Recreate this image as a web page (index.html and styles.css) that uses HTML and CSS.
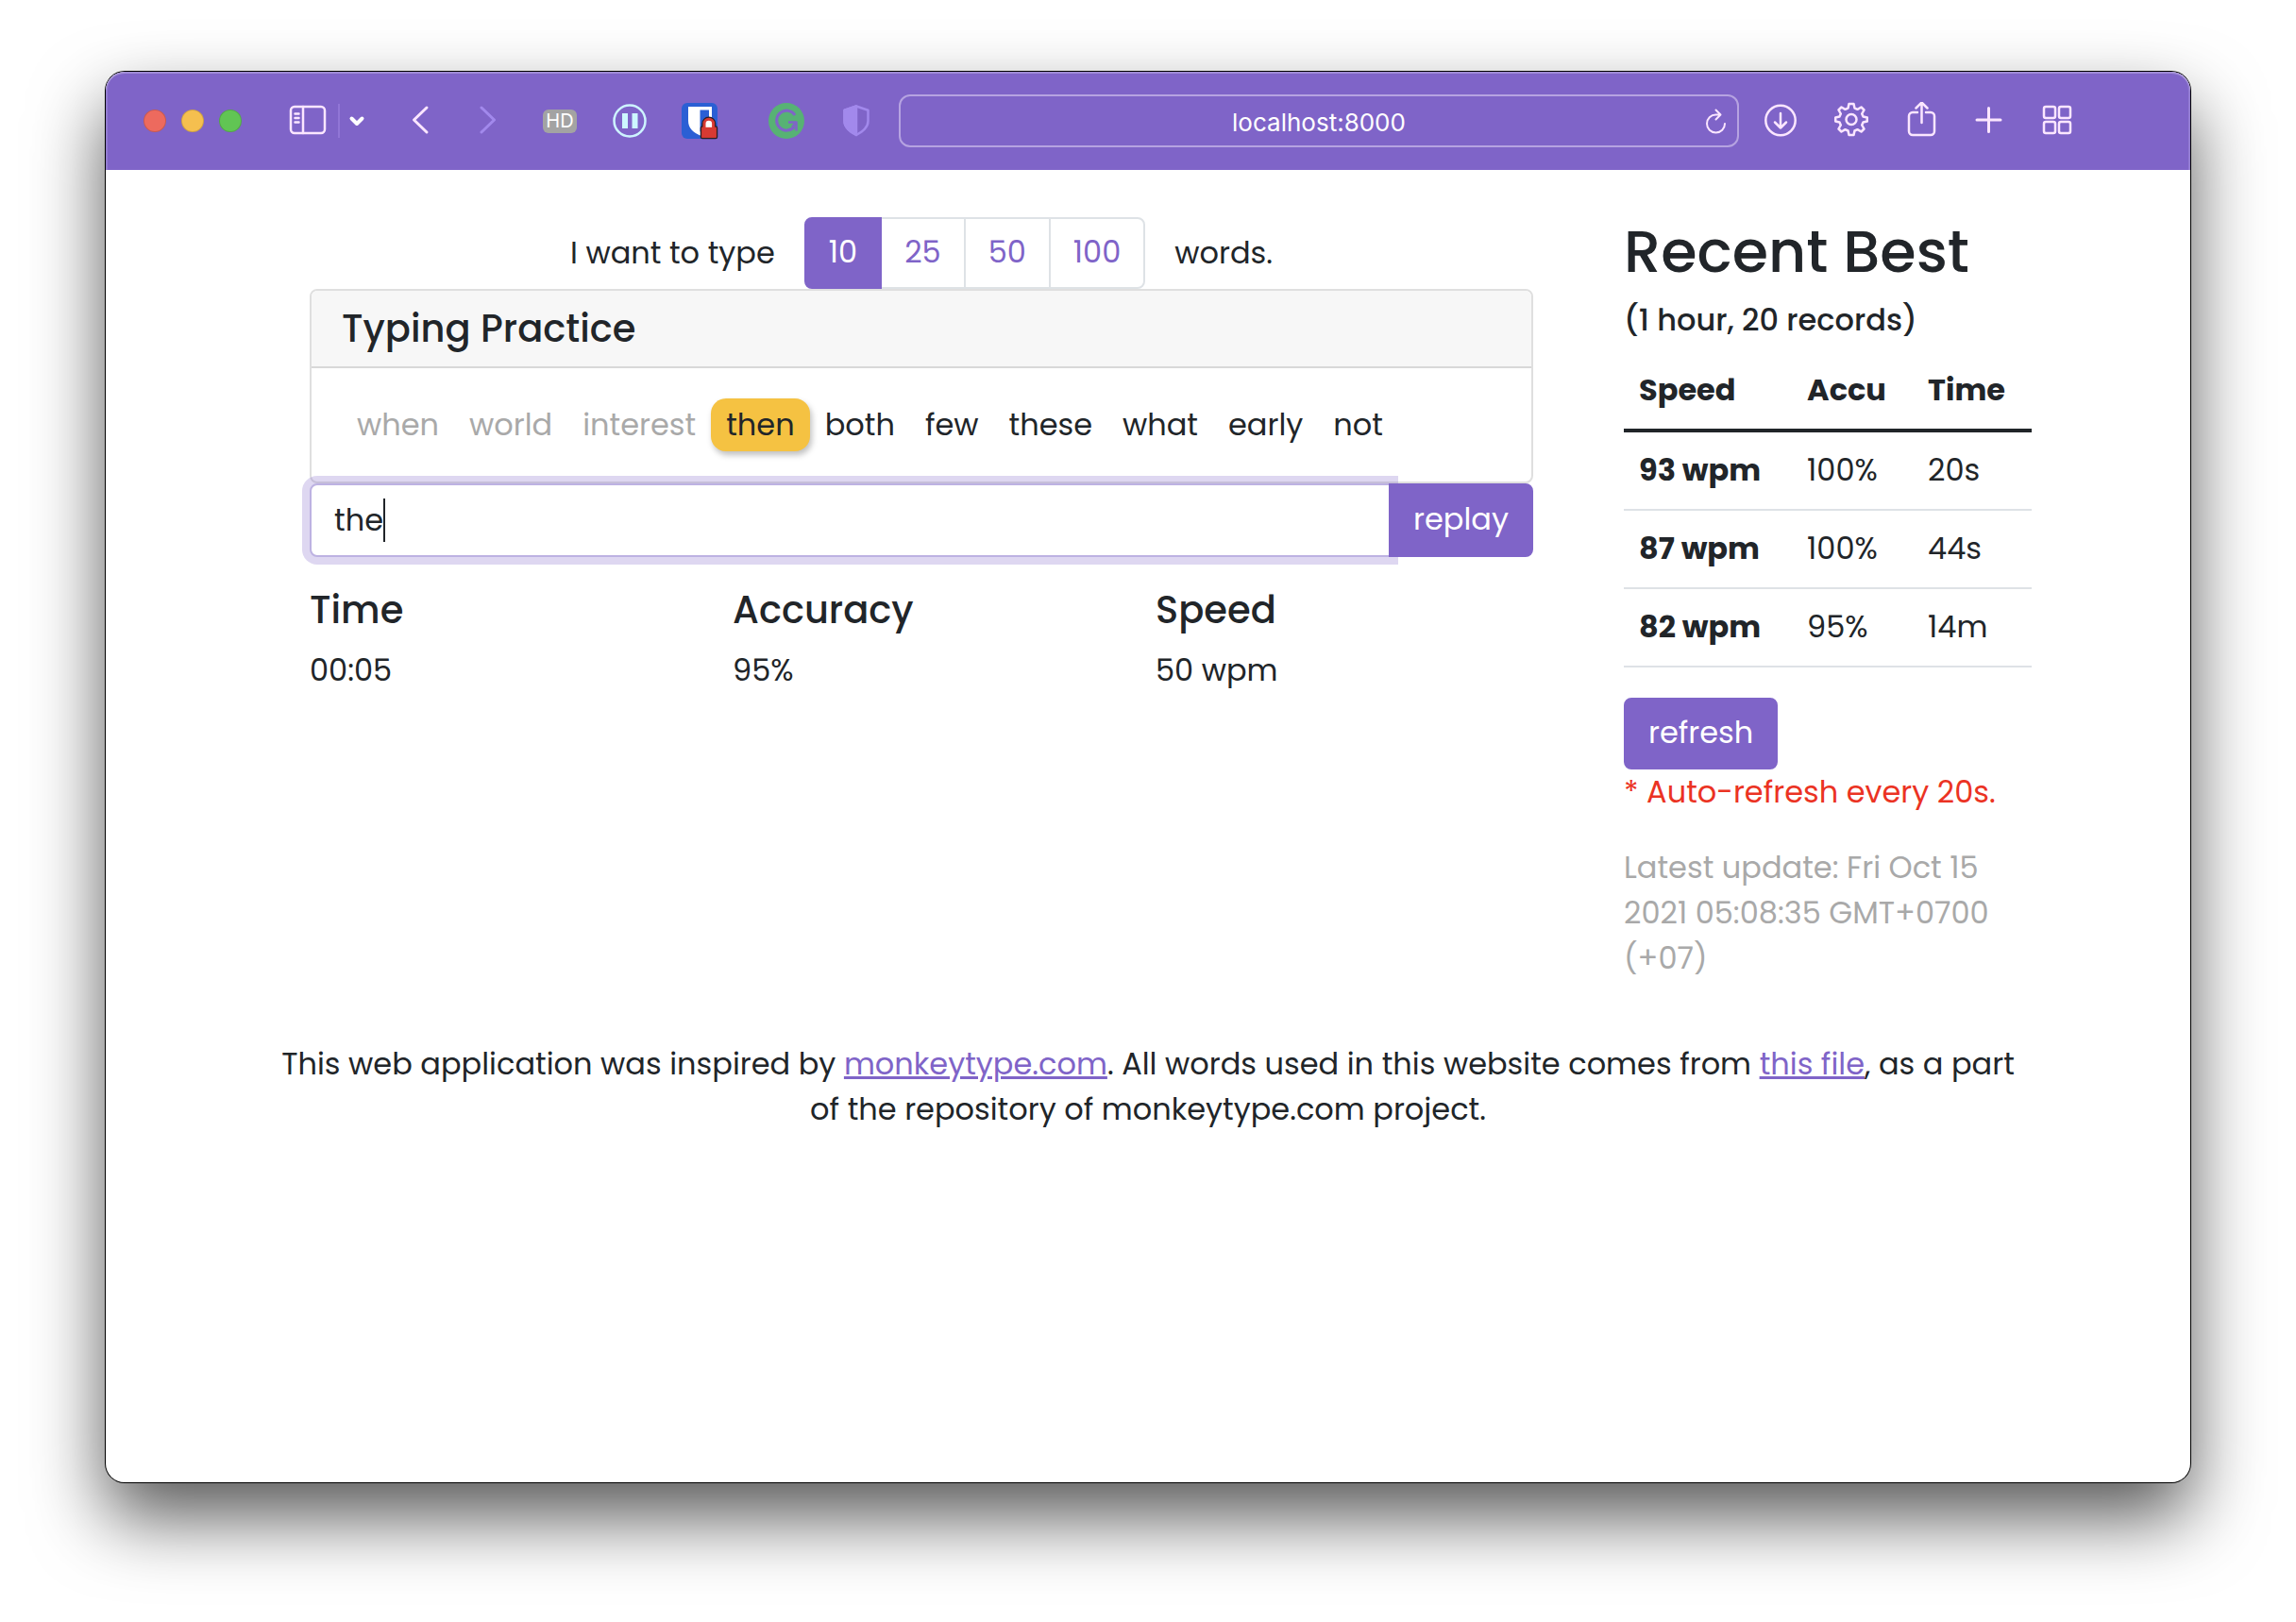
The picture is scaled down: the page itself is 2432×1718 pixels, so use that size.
FILE: index.html
```
<!DOCTYPE html>
<html lang="en">
<head>
<meta charset="utf-8">
<meta name="viewport" content="width=device-width, initial-scale=1">
<title>Typing Practice</title>
<link rel="stylesheet" href="styles.css">
</head>
<body>
<div class="window">
  <header class="toolbar">
    <div class="lights">
      <button class="light light-close" aria-label="Close"></button>
      <button class="light light-min" aria-label="Minimise"></button>
      <button class="light light-max" aria-label="Zoom"></button>
    </div>
    <div class="sidebar-tools">
      <button class="tool" aria-label="Sidebar"><svg width="40" height="40" viewBox="0 0 40 40"><rect x="2" y="5" width="36" height="28" rx="4"/><path d="M15 5v28M6.500 12.500h4M6.500 17h4M6.500 21.500h4" /></svg></button>
      <span class="divider"></span>
      <button class="tool tool-small" aria-label="Tab groups"><svg class="bold" width="20" height="40" viewBox="0 0 20 40"><path d="M4.500 17.500l5.500 5.500 5.500-5.500"/></svg></button>
    </div>
    <div class="nav-tools">
      <button class="tool" aria-label="Back"><svg class="medium" width="32" height="40" viewBox="0 0 32 40"><path d="M23 6L9.500 19 23 32"/></svg></button>
      <button class="tool tool-off" aria-label="Forward"><svg class="medium" width="32" height="40" viewBox="0 0 32 40"><path d="M9 6l13.500 13L9 32"/></svg></button>
    </div>
    <div class="extensions">
      <button class="tool hd" aria-label="HD video"><span class="hd-badge">HD</span></button>
      <button class="tool" aria-label="Pause"><svg width="40" height="40" viewBox="0 0 40 40"><circle cx="20" cy="20" r="16.500" fill="none" stroke="#cdf3ff" stroke-width="2.500"/><path d="M12 12h6v16h-6zM22.500 12h6v16h-6z" fill="#cdf6ff" stroke="none"/></svg></button>
      <button class="tool" aria-label="Password manager"><svg width="40" height="40" viewBox="0 0 40 40"><g stroke="none"><rect x="1" y="1" width="38" height="38" rx="6" fill="#2b5fd4"/><path d="M8 5h25v15c0 8-6 12.500-12.500 15.500C14 32.500 8 28 8 20z" fill="#fff"/><path d="M20.500 8.500H30V20c0 5-4 8.500-9.500 11.500z" fill="#2b5fd4"/></g><path d="M25 27v-4a4.800 4.800 0 0 1 9.600 0v4" stroke="#2a2027" stroke-width="5.500"/><rect x="21.500" y="26" width="17" height="12.500" rx="1.500" fill="#d83a33" stroke="#2a2027" stroke-width="1.500"/><path d="M25 27v-4a4.800 4.800 0 0 1 9.600 0v4" fill="#fff" stroke="#d83a33" stroke-width="3"/><path d="M22.300 26.800h15.400v11H22.300z" fill="#d83a33" stroke="none"/></svg></button>
      <button class="tool tool-apart" aria-label="Writing assistant"><svg width="40" height="40" viewBox="0 0 40 40"><circle cx="20" cy="20" r="19" fill="#57b274" stroke="none"/><g stroke="#7f64c8" stroke-linecap="butt"><path d="M29 14A10.500 10.500 0 1 0 28.500 26" stroke-width="3"/><path d="M22 21.500h8.500v9M30 22l-4 4.500" stroke-width="2.500"/></g></svg></button>
      <button class="tool" aria-label="Privacy report"><svg width="40" height="40" viewBox="0 0 40 40"><g stroke="#a289ec"><path d="M20 4.500l12.500 4.200V20c0 7-5.500 11-12.500 15C13 31 7.500 27 7.500 20V8.700z"/><path d="M20 4.500V35C13 31 7.500 27 7.500 20V8.700z" fill="#a289ec"/></g></svg></button>
    </div>
    <div class="address">
      <input class="address-input" type="text" value="localhost:8000" aria-label="Address">
      <button class="reload" aria-label="Reload"><svg width="28" height="32" viewBox="0 0 28 32"><path d="M18 9.500h-4.500A9.500 9.500 0 1 0 23 19M13.500 4.500l5 5-5 5"/></svg></button>
    </div>
    <div class="page-tools">
      <button class="tool" aria-label="Downloads"><svg width="40" height="40" viewBox="0 0 40 40"><circle cx="21" cy="19.500" r="15.700"/><path d="M21 12v15.500M15 21.500l6 6 6-6"/></svg></button>
      <button class="tool" aria-label="Settings"><svg width="40" height="40" viewBox="0 0 40 40"><g transform="translate(1 -2)"><circle cx="21" cy="20.500" r="5.500"/><path d="M18.500 4h5l1 4.500 3 1.300 4-2.300 3 3-2.300 4 1.300 3 4.300 1v4l-4.300 1-1.300 3 2.300 4-3 3-4-2.300-3 1.300-1 4.500h-5l-1-4.500-3-1.300-4 2.300-3-3 2.300-4-1.300-3-4.300-1v-4l4.300-1 1.300-3-2.300-4 3-3 4 2.300 3-1.300z"/></g></svg></button>
      <button class="tool" aria-label="Share"><svg width="40" height="40" viewBox="0 0 40 40"><path d="M18 11h-5a4 4 0 0 0-4 4v16a4 4 0 0 0 4 4h19a4 4 0 0 0 4-4V15a4 4 0 0 0-4-4h-5M22.500 22V0.500M16.500 6.500l6-6 6 6"/></svg></button>
      <button class="tool" aria-label="New tab"><svg class="medium" width="40" height="40" viewBox="0 0 40 40"><path d="M19.500 6.500v25M7 19h25"/></svg></button>
      <button class="tool" aria-label="Tab overview"><svg width="40" height="40" viewBox="0 0 40 40"><rect x="4" y="5" width="12" height="12" rx="2"/><rect x="20" y="5" width="12" height="12" rx="2"/><rect x="4" y="21" width="12" height="12" rx="2"/><rect x="20" y="21" width="12" height="12" rx="2"/></svg></button>
    </div>
  </header>

  <div class="container">
    <div class="columns">
      <main class="practice">
        <div class="chooser">
          <span>I want to type</span>
          <div class="pagination">
            <button class="page-link active" aria-pressed="true">10</button>
            <button class="page-link">25</button>
            <button class="page-link">50</button>
            <button class="page-link">100</button>
          </div>
          <span>words.</span>
        </div>
        <section class="card">
          <h2 class="card-header">Typing Practice</h2>
          <div class="card-body">
            <span class="word done">when</span>
            <span class="word done">world</span>
            <span class="word done">interest</span>
            <span class="word current">then</span>
            <span class="word">both</span>
            <span class="word">few</span>
            <span class="word">these</span>
            <span class="word">what</span>
            <span class="word">early</span>
            <span class="word">not</span>
          </div>
        </section>
        <form class="input-group">
          <input class="typing-input" type="text" value="the" aria-label="Type the words">
          <span class="caret"></span>
          <button class="btn btn-replay" type="button">replay</button>
        </form>
        <div class="stats">
          <div><h3 class="stat-title">Time</h3><p class="stat-value">00:05</p></div>
          <div><h3 class="stat-title">Accuracy</h3><p class="stat-value">95%</p></div>
          <div><h3 class="stat-title">Speed</h3><p class="stat-value">50 wpm</p></div>
        </div>
      </main>

      <aside class="best">
        <h1 class="best-title">Recent Best</h1>
        <h2 class="best-note">(1 hour, 20 records)</h2>
        <table class="records">
          <thead><tr><th scope="col">Speed</th><th scope="col">Accu</th><th scope="col">Time</th></tr></thead>
          <tbody>
            <tr><th scope="row">93 wpm</th><td>100%</td><td>20s</td></tr>
            <tr><th scope="row">87 wpm</th><td>100%</td><td>44s</td></tr>
            <tr><th scope="row">82 wpm</th><td>95%</td><td>14m</td></tr>
          </tbody>
        </table>
        <button class="btn" type="button">refresh</button>
        <p class="auto">* Auto-refresh every 20s.</p>
        <p class="updated">Latest update: Fri Oct 15 2021 05:08:35 GMT+0700 (+07)</p>
      </aside>
    </div>
    <footer class="footer">This web application was inspired by <a href="https://monkeytype.com">monkeytype.com</a>. All words used in this website comes from <a href="#words">this file</a>, as a part of the repository of monkeytype.com project.</footer>
  </div>
</div>
</body>
</html>
```
FILE: styles.css
```
:root {
  --purple: #7f64c8;
  --ink: #212529;
  --line: #dee2e6;
  --muted: #a9a9a9;
  --icon: #fbe6ff;
}

* { box-sizing: border-box; }

body {
  margin: 0;
  padding: 76px 112px 148px;
  background: #fff;
  color: var(--ink);
  font: 400 32px/48px Poppins, Inter, sans-serif;
}

h1, h2, h3, p { margin: 0; }
button, input { font: inherit; color: inherit; }
button { margin: 0; padding: 0; border: 0; background: none; }
a { color: var(--purple); }

/* Browser window */
.window {
  min-height: calc(100vh - 224px);
  border-radius: 20px;
  background: #fff;
  box-shadow: 0 0 0 1px #000, 0 37px 78px rgba(0, 0, 0, .66);
}

.toolbar {
  display: flex;
  align-items: center;
  height: 104px;
  padding: 0 119px 0 40px;
  border-radius: 20px 20px 0 0;
  background: var(--purple);
  box-shadow: inset 0 2px rgba(255, 255, 255, .25), inset 2px 0 rgba(255, 255, 255, .15), inset -2px 0 rgba(255, 255, 255, .15);
}

.lights { display: flex; gap: 16px; }
.light { width: 24px; height: 24px; border: 1px solid rgba(0, 0, 0, .15); border-radius: 50%; }
.light-close { background: #ed6a5e; }
.light-min { background: #f5bf4f; }
.light-max { background: #61c554; }

.tool, .reload { display: flex; flex: none; }
.toolbar svg {
  display: block;
  fill: none;
  stroke: var(--icon);
  stroke-width: 2.5;
  stroke-linecap: round;
  stroke-linejoin: round;
}
.toolbar svg.medium { stroke-width: 3; }
.toolbar svg.bold { stroke-width: 4; stroke: #fff; }
.toolbar .tool-off svg { stroke: #a289ec; }
.toolbar .reload svg { stroke-width: 2; }

.sidebar-tools { display: flex; align-items: center; margin-left: 50px; }
.divider { width: 2px; height: 36px; margin: 0 8px 0 12px; background: #9176d6; }
.nav-tools { display: flex; gap: 40px; margin-left: 41px; }
.extensions { display: flex; align-items: center; gap: 34px; margin-left: 40px; }
.tool-apart { margin-left: 18px; }
.hd { width: 40px; justify-content: center; }
.hd-badge {
  width: 36px;
  border-radius: 6px;
  background: #a3a3a3;
  color: #fff;
  font: 400 20px/25px Inter, sans-serif;
}

.address { display: flex; flex: 1; position: relative; margin: 0 23px 0 25px; }
.address-input {
  width: 100%;
  min-width: 0;
  height: 56px;
  padding: 2px 48px 0;
  border: 2px solid #b6a3e1;
  border-radius: 12px;
  background: none;
  color: #fff;
  font: 400 26px/32px Inter, sans-serif;
  text-align: center;
}
.reload { position: absolute; right: 10px; top: 12px; }
.page-tools { display: flex; gap: 34px; }

/* Page */
.container { max-width: 1920px; margin: 0 auto; padding: 50px 24px 48px; }
.columns { display: grid; grid-template-columns: 3fr 1fr; align-items: start; margin: 0 -24px; }
.practice { min-width: 0; padding: 0 72px; }
.best { min-width: 0; padding: 0 24px; }

.chooser { display: flex; justify-content: center; align-items: center; gap: 31px; }
.pagination { display: flex; }
.page-link {
  padding: 11px 24px 13px;
  border: 2px solid var(--line);
  color: var(--purple);
}
.page-link + .page-link { margin-left: -2px; }
.page-link:first-child { border-radius: 8px 0 0 8px; }
.page-link:last-child { border-radius: 0 8px 8px 0; }
.page-link.active { position: relative; border-color: var(--purple); background: var(--purple); color: #fff; }

.card { border: 2px solid #dfdfdf; border-radius: 8px; }
.card-header {
  padding: 16px 32px;
  border-bottom: 2px solid #d8d8d8;
  border-radius: 6px 6px 0 0;
  background: #f7f7f7;
  font-size: 40px;
  font-weight: 500;
}
.card-body { display: flex; flex-wrap: wrap; padding: 32px; }
.word { padding: 4px 16px; }
.word.done { color: var(--muted); }
.word.current { border-radius: 16px; background: #f5c242; box-shadow: 2px 4px 6px rgba(0, 0, 0, .25); }

.input-group { display: flex; position: relative; }
.typing-input {
  flex: 1;
  min-width: 0;
  height: 78px;
  padding: 12px 24px;
  border: 2px solid #bdb2e2;
  border-radius: 8px 0 0 8px;
  outline: 0;
  background: #fff;
  box-shadow: 0 0 0 8px rgba(127, 100, 200, .26);
}
.caret { position: absolute; left: 78px; top: 16px; width: 2px; height: 46px; background: var(--ink); }

.btn {
  padding: 11px 24px 13px;
  border: 2px solid var(--purple);
  border-radius: 8px;
  background: var(--purple);
  color: #fff;
}
.btn-replay { position: relative; margin-left: -2px; border-radius: 0 8px 8px 0; }

.stats { display: grid; grid-template-columns: repeat(3, 1fr); gap: 48px; padding-top: 32px; }
.stat-title { margin-bottom: 16px; font-size: 40px; font-weight: 500; }

.best-title { margin-bottom: 16px; font-size: 62px; font-weight: 500; line-height: 74px; }
.best-note { margin-bottom: 16px; font-size: 32px; font-weight: 500; line-height: 38px; }
.records { width: 100%; margin-bottom: 32px; border-spacing: 0; text-align: left; }
.records th, .records td { padding: 16px 16px 17px; border-bottom: 2px solid var(--line); }
.records thead th { padding: 15px 16px 17px; border-bottom: 4px solid var(--ink); }
.best .btn { display: block; }
.auto { margin-bottom: 32px; color: #eb3323; }
.updated { color: var(--muted); }

.footer { margin-top: 64px; text-align: center; }
```
